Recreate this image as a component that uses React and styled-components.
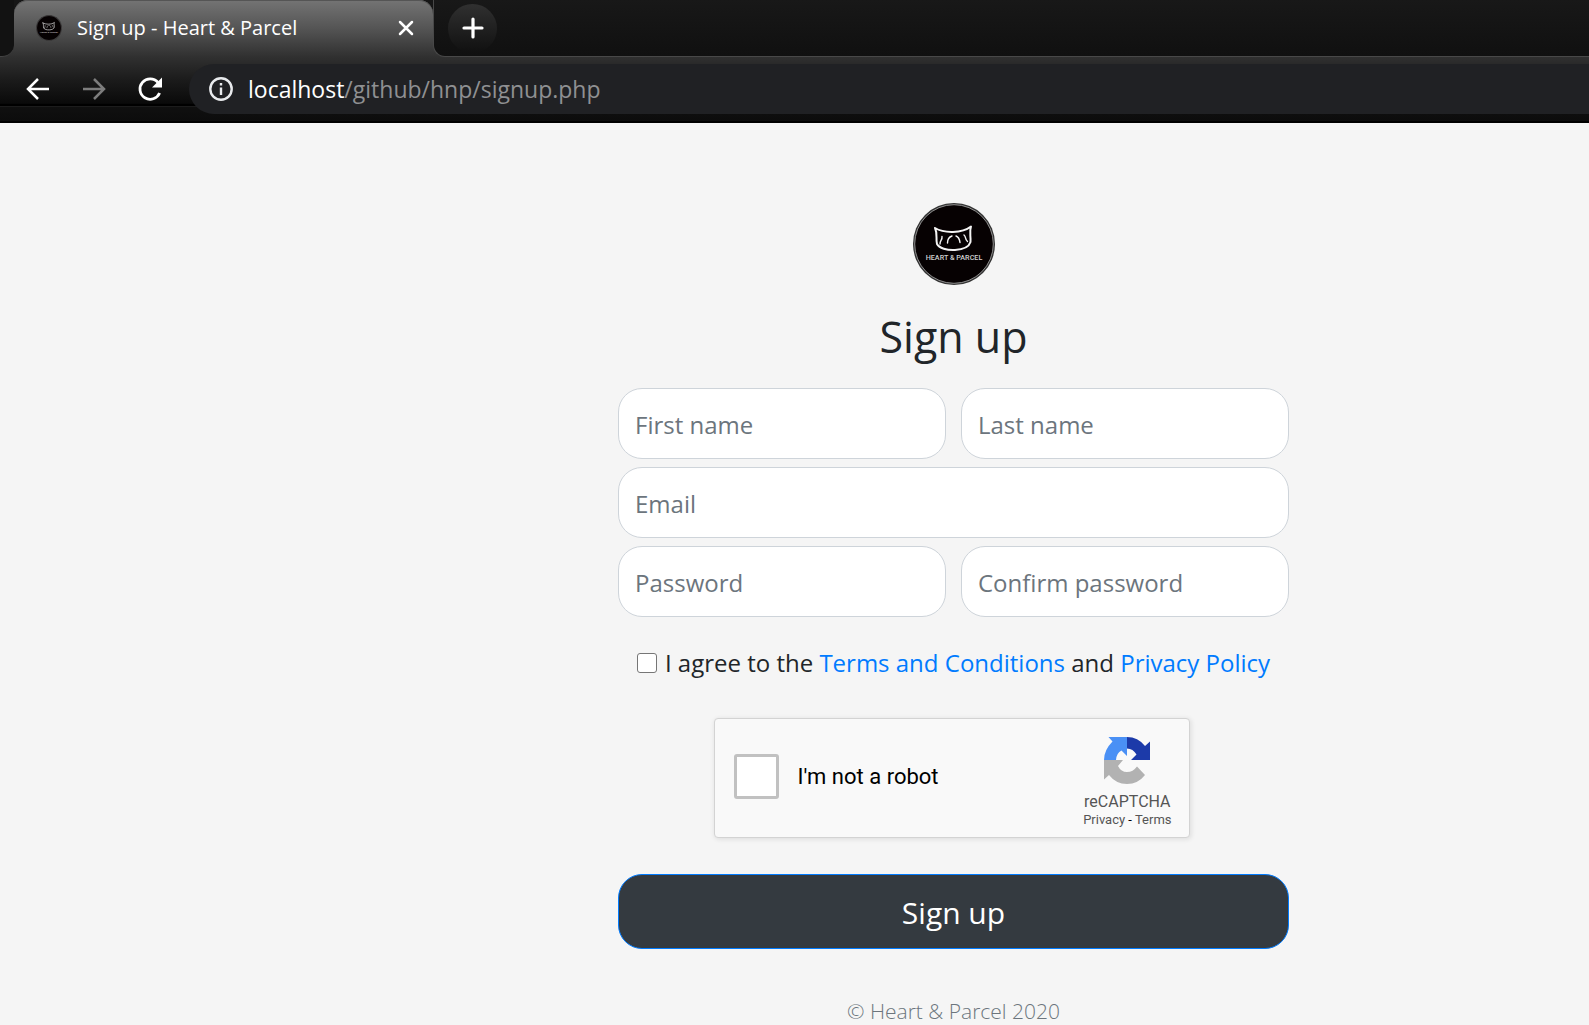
import React from "react";
import styled, { createGlobalStyle } from "styled-components";

const GlobalStyle = createGlobalStyle`
  *, *::before, *::after { box-sizing: border-box; }
  html { background: #f5f5f5; }
  body {
    margin: 0;
    overflow: hidden;
    background: #f5f5f5;
    color: #212529;
    font-family: "Open Sans", "Noto Sans", sans-serif;
  }
`;

const chromeFade =
  "linear-gradient(#747474 0, #555 28px, #303030 57px, #1b1b1b 80px, #0a0a0a 103px, #060606 104px)";

/* ---------- browser frame ---------- */

const BrowserChrome = styled.header`
  height: 123px;
  background:
    linear-gradient(
      transparent 104px,
      #000 104px,
      #000 106px,
      #1c1c1c 106px,
      #1c1c1c 107px,
      #101010 107px,
      #0c0c0c 121px,
      #000 121px
    ),
    ${chromeFade};
`;

const TabStrip = styled.div`
  display: flex;
  height: 57px;
`;

const StripStart = styled.div`
  width: 14px;
  background: #121212;
  border-bottom: 1px solid #444;
  border-bottom-right-radius: 12px;
`;

const TabCell = styled.div`
  width: 419px;
  background: #161616;
`;

const Tab = styled.div`
  display: flex;
  align-items: center;
  gap: 15px;
  height: 57px;
  padding: 0 19px 2px 22px;
  border-radius: 14px 14px 0 0;
  background: ${chromeFade};
  box-shadow: inset 0 1px 0 #555;
`;

const TabTitle = styled.span`
  flex: 1;
  color: #fff;
  font-size: 20px;
  line-height: 28px;
  white-space: nowrap;
`;

const StripEnd = styled.div`
  display: flex;
  flex: 1;
  align-items: center;
  padding-left: 14px;
  background: linear-gradient(#181818, #101010);
  border-bottom: 1px solid #484848;
  border-left: 1px solid #484848;
  border-bottom-left-radius: 12px;
`;

const IconButton = styled.button`
  display: grid;
  place-items: center;
  width: ${(p) => p.$size}px;
  height: ${(p) => p.$size}px;
  padding: 0;
  border: 0;
  border-radius: 50%;
  background: ${(p) => p.$fill || "none"};
  color: ${(p) => (p.disabled ? "#7d7d7d" : "#fff")};
`;

const Toolbar = styled.div`
  display: flex;
  align-items: center;
  padding: 4px 0 0 10px;
`;

const NavButtons = styled.nav`
  display: flex;
  width: 179px;
`;

const AddressBar = styled.div`
  display: flex;
  flex: 1;
  align-items: center;
  gap: 15px;
  height: 50px;
  padding-left: 20px;
  border-radius: 25px 0 0 25px;
  background: #202124;
  color: #fff;
`;

const Url = styled.div`
  flex: 1;
  outline: none;
  color: #8f9092;
  font-size: 23px;
  line-height: 32px;
  white-space: nowrap;
`;

const UrlHost = styled.span`
  color: #fff;
`;

/* ---------- sign-up page ---------- */

const Page = styled.main`
  display: flex;
  justify-content: center;
  padding: 80px 0 0 318px;
`;

const SignupForm = styled.form`
  display: flex;
  flex-direction: column;
  align-items: center;
  width: 671px;
`;

const Title = styled.h1`
  margin: 20px 0 19px;
  font-size: 43px;
  font-weight: 400;
  line-height: 64px;
`;

const Fields = styled.div`
  display: grid;
  grid-template-columns: 1fr 1fr;
  gap: 8px 15px;
  width: 100%;
`;

const Field = styled.input`
  grid-column: ${(p) => (p.$wide ? "1 / -1" : "auto")};
  width: 100%;
  min-width: 0;
  height: 71px;
  padding: 2px 16px 0;
  border: 1px solid #ced4da;
  border-radius: 24px;
  outline: none;
  background: #fff;
  font-family: inherit;
  font-size: 24px;

  &::placeholder {
    color: #6c757d;
    opacity: 1;
  }
`;

const Agreement = styled.div`
  display: flex;
  align-items: center;
  gap: 8px;
  margin: 28px 0 37px;
  font-size: 24px;
  line-height: 36px;
  white-space: nowrap;
`;

const TickBox = styled.input`
  appearance: none;
  width: ${(p) => p.$size}px;
  height: ${(p) => p.$size}px;
  margin: 0;
  border: ${(p) => p.$line} solid ${(p) => p.$tone};
  border-radius: 3px;
  background: #fff;
`;

const TextLink = styled.a`
  color: #007bff;
  text-decoration: none;
`;

const Captcha = styled.section`
  display: flex;
  align-items: flex-start;
  width: 476px;
  height: 120px;
  margin-right: 4px;
  padding: 0 17px 0 19px;
  border: 1px solid #d3d3d3;
  border-radius: 4px;
  background: #f9f9f9;
  box-shadow: 1px 1px 4px 1px rgba(0, 0, 0, 0.08);
  font-family: Roboto, sans-serif;
`;

const RobotLabel = styled.label`
  display: flex;
  flex: 1;
  align-items: center;
  gap: 19px;
  padding-top: 35px;
  color: #000;
  font-size: 22px;
`;

const CaptchaBrand = styled.div`
  display: flex;
  flex-direction: column;
  align-items: center;
  padding-top: 18px;
  color: #555;
  font-size: 16px;
  line-height: 20px;
`;

const BrandName = styled.span`
  margin-top: 8px;
`;

const CaptchaLinks = styled.div`
  color: #000;
  font-size: 13px;
  line-height: 16px;
`;

const CaptchaLink = styled.a`
  color: #555;
  text-decoration: none;
`;

const SubmitButton = styled.button`
  width: 100%;
  height: 75px;
  margin-top: 36px;
  padding: 2px 0 0;
  border: 1px solid #007bff;
  border-radius: 24px;
  background: #343a40;
  color: #fff;
  font-family: inherit;
  font-size: 30px;
  line-height: 40px;
`;

const Copyright = styled.p`
  margin: 44px 0 0;
  color: #6c757d;
  font-size: 21px;
  font-weight: 300;
  line-height: 36px;
  white-space: nowrap;
`;

/* ---------- drawings ---------- */

const Logo = ({ size }) => (
  <svg width={size} height={size} viewBox="0 0 82 82" role="img" aria-label="Heart & Parcel">
    <circle cx="41" cy="41" r="41" fill="#333" />
    <circle cx="41" cy="41" r="39.3" fill="#060102" stroke="#aaa" strokeWidth="0.8" />
    <g fill="none" stroke="#f4f4f4" strokeLinecap="round" strokeLinejoin="round">
      <path d="M22 25 C31 30.500 49 30.500 58 23.500 C56 29 58 33 57.500 39 C56 44 50 46.500 42 47 C34 47.500 26 45 24 41 C22.500 36 25 31 22 25 Z" strokeWidth="2" />
      <path d="M29 33.500 C29.500 37 27 37 27 41 M39 33 C36 34 34.500 36 34.500 40 M43 33 C46 34 46.500 36 47 39.500 M51 32 C53.500 34 51.500 36 54.500 38.500" strokeWidth="1.400" />
    </g>
    <text
      x="41"
      y="57"
      fill="#d0d0d0"
      fontFamily="Roboto, sans-serif"
      fontSize="7.200"
      fontWeight="500"
      textAnchor="middle"
    >
      HEART &amp; PARCEL
    </text>
  </svg>
);

const CloseIcon = () => (
  <svg width="16" height="16" viewBox="0 0 16 16" stroke="currentColor" strokeWidth="2.500" strokeLinecap="round">
    <path d="M2 2 14 14 M14 2 2 14" />
  </svg>
);

const PlusIcon = () => (
  <svg width="22" height="22" viewBox="0 0 22 22" stroke="currentColor" strokeWidth="3.200" strokeLinecap="round">
    <path d="M11 2V20 M2 11H20" />
  </svg>
);

const ArrowIcon = ({ forward }) => (
  <svg width="24" height="24" viewBox="0 0 24 24" fill="none" stroke="currentColor" strokeWidth="2.500">
    <path d={forward ? "M1 12H22 M12 2 22 12 12 22" : "M23 12H2 M12 2 2 12 12 22"} />
  </svg>
);

const ReloadIcon = () => (
  <svg width="26" height="26" viewBox="0 0 26 26">
    <path d="M21 6.500 A10.200 10.200 0 1 0 22.600 17" fill="none" stroke="currentColor" strokeWidth="2.800" />
    <path d="M25 1.500V11.500H15Z" fill="currentColor" />
  </svg>
);

const InfoIcon = () => (
  <svg width="24" height="24" viewBox="0 0 24 24" fill="none" stroke="#e8eaed" strokeWidth="2.400">
    <circle cx="12" cy="12" r="10.700" />
    <path d="M12 10.500V18 M12 6V8.500" />
  </svg>
);

const RecaptchaIcon = () => (
  <svg width="46" height="47" viewBox="0 0 46 47">
    <path d="M23 0V19L17.500 13.500Q12.500 16 12 23H0Q0 13 8.500 4.500L4.500 0Z" fill="#4a90f5" />
    <path d="M23 0Q34 0 41 9L46 4.500V23H27L32.500 17.500Q29 11.500 23 11.500Z" fill="#1c3aa9" />
    <path d="M0 23H19L14 29Q17 35 23 35Q29 35 33 29.500L41 38Q34 47 23 47Q12 47 5 38L0 42.500Z" fill="#b2b2b2" />
  </svg>
);

export default function App() {
  return (
    <>
      <GlobalStyle />
      <BrowserChrome>
        <TabStrip>
          <StripStart />
          <TabCell>
            <Tab>
              <Logo size={26} />
              <TabTitle>Sign up - Heart &amp; Parcel</TabTitle>
              <IconButton $size={16} aria-label="Close tab">
                <CloseIcon />
              </IconButton>
            </Tab>
          </TabCell>
          <StripEnd>
            <IconButton $size={49} $fill="linear-gradient(#303030, #101010)" aria-label="New tab">
              <PlusIcon />
            </IconButton>
          </StripEnd>
        </TabStrip>
        <Toolbar>
          <NavButtons>
            <IconButton $size={56} aria-label="Back">
              <ArrowIcon />
            </IconButton>
            <IconButton $size={56} aria-label="Forward" disabled>
              <ArrowIcon forward />
            </IconButton>
            <IconButton $size={56} aria-label="Reload">
              <ReloadIcon />
            </IconButton>
          </NavButtons>
          <AddressBar>
            <InfoIcon />
            <Url
              role="textbox"
              aria-label="Address"
              contentEditable
              suppressContentEditableWarning
              spellCheck={false}
            >
              <UrlHost>localhost</UrlHost>/github/hnp/signup.php
            </Url>
          </AddressBar>
        </Toolbar>
      </BrowserChrome>

      <Page>
        <SignupForm>
          <Logo size={82} />
          <Title>Sign up</Title>
          <Fields>
            <Field type="text" placeholder="First name" aria-label="First name" />
            <Field type="text" placeholder="Last name" aria-label="Last name" />
            <Field type="email" placeholder="Email" aria-label="Email" $wide />
            <Field type="password" placeholder="Password" aria-label="Password" />
            <Field type="password" placeholder="Confirm password" aria-label="Confirm password" />
          </Fields>
          <Agreement>
            <TickBox type="checkbox" id="agree" $size={20} $line="1px" $tone="#767676" />
            <label htmlFor="agree">
              I agree to the <TextLink href="#terms">Terms and Conditions</TextLink> and{" "}
              <TextLink href="#privacy">Privacy Policy</TextLink>
            </label>
          </Agreement>
          <Captcha>
            <RobotLabel>
              <TickBox type="checkbox" $size={45} $line="3px" $tone="#c1c1c1" />
              I'm not a robot
            </RobotLabel>
            <CaptchaBrand>
              <RecaptchaIcon />
              <BrandName>reCAPTCHA</BrandName>
              <CaptchaLinks>
                <CaptchaLink href="#captcha-privacy">Privacy</CaptchaLink> -{" "}
                <CaptchaLink href="#captcha-terms">Terms</CaptchaLink>
              </CaptchaLinks>
            </CaptchaBrand>
          </Captcha>
          <SubmitButton type="submit">Sign up</SubmitButton>
          <Copyright>© Heart &amp; Parcel 2020</Copyright>
        </SignupForm>
      </Page>
    </>
  );
}
